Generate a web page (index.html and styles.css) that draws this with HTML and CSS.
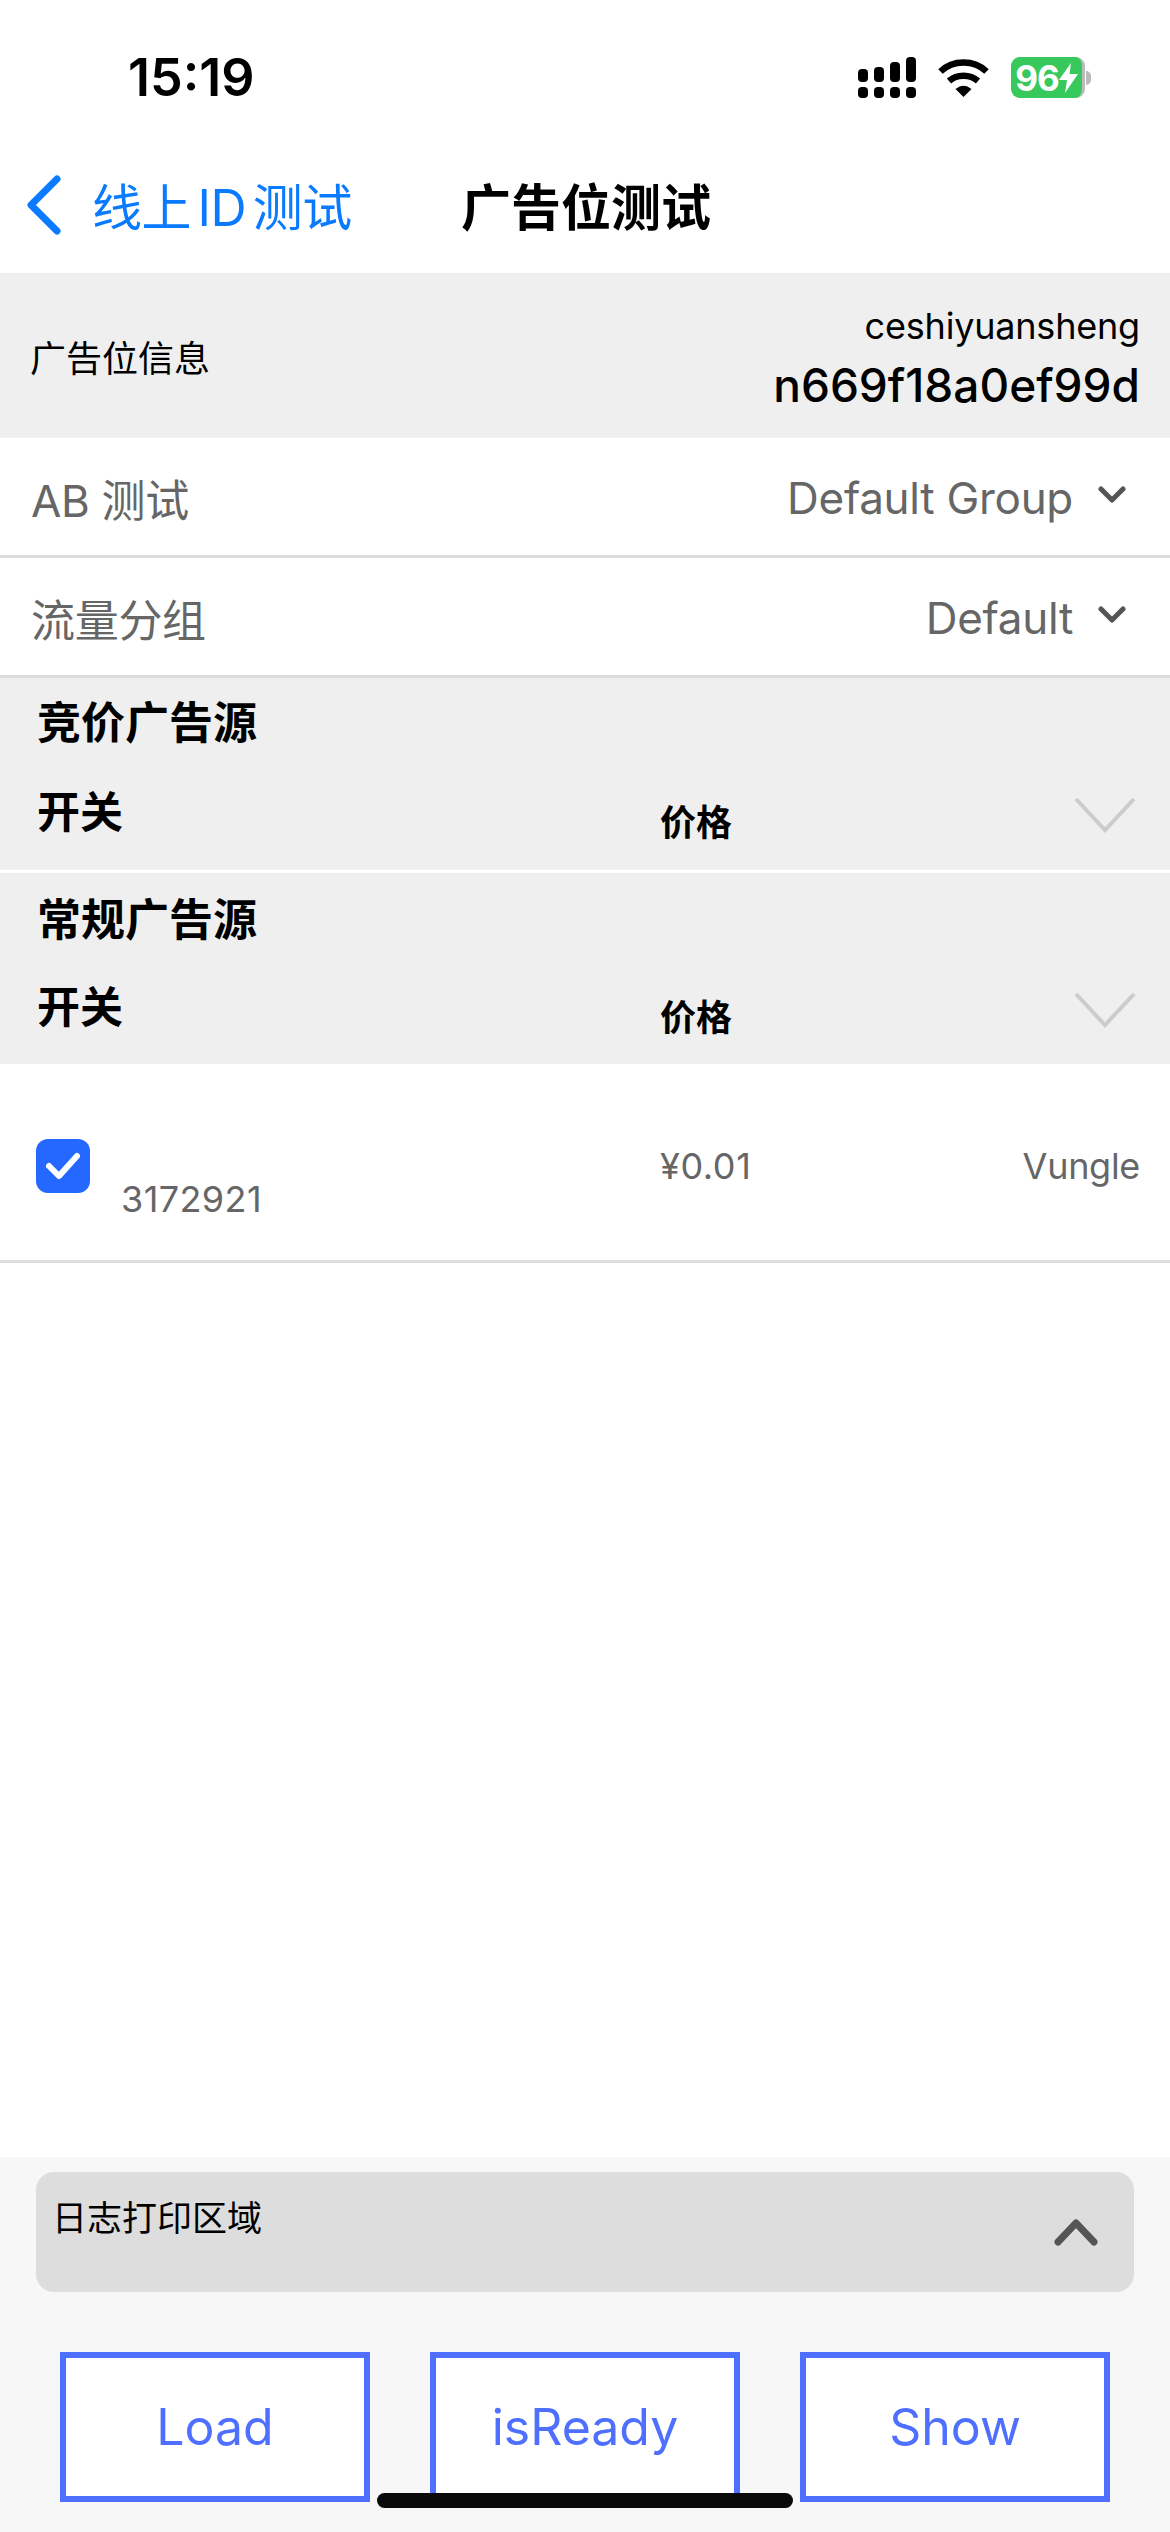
FILE: index.html
```html
<!DOCTYPE html>
<html lang="zh-CN">
<head>
    <meta charset="UTF-8">
    <meta name="viewport" content="width=device-width, initial-scale=1.0">
    <title>广告位测试</title>
    <link rel="stylesheet" href="styles.css">
</head>
<body>
    <div class="screen">
        <div class="status-bar">
            <span class="time">15:19</span>
            <div class="status-icons">
                <svg class="signal" width="58" height="41" viewBox="0 0 58 41" fill="#000">
                    <rect x="0" y="12" width="10" height="13" rx="4"/>
                    <rect x="16" y="10" width="10" height="15" rx="4"/>
                    <rect x="32" y="5" width="10" height="20" rx="4"/>
                    <rect x="48" y="0" width="10" height="25" rx="4"/>
                    <rect x="0" y="30" width="10" height="11" rx="4"/>
                    <rect x="16" y="30" width="10" height="11" rx="4"/>
                    <rect x="32" y="30" width="10" height="11" rx="4"/>
                    <rect x="48" y="30" width="10" height="11" rx="4"/>
                </svg>
                <svg class="wifi" width="51" height="39" viewBox="0 0 51 39" fill="none" stroke="#000" stroke-width="6.5">
                    <path d="M2.500 13.500 C15 1.500 36 1.500 48.500 13.500"/>
                    <path d="M11 23 C19 16 32 16 40 23"/>
                    <path d="M17.500 31 L25.500 39 L33.500 31 C28 26.500 23 26.500 17.500 31 Z" fill="#000" stroke="none"/>
                </svg>
                <div class="battery">
                    <div class="battery-body">
                        <span>96</span>
                        <svg width="19" height="30" viewBox="0 0 19 30" fill="#fff">
                            <path d="M12 0 L0 17 L8 17 L6 30 L19 11 L10.500 11 Z"/>
                        </svg>
                    </div>
                    <div class="battery-nub"></div>
                </div>
            </div>
        </div>

        <div class="nav-bar">
            <div class="nav-back">
                <svg width="36" height="60" viewBox="0 0 36 60" fill="none" stroke="#0a7aff" stroke-width="7" stroke-linecap="round" stroke-linejoin="round">
                    <path d="M31 4 L5 30 L31 56"/>
                </svg>
                <span>线上 ID 测试</span>
            </div>
            <h1 class="nav-title">广告位测试</h1>
        </div>

        <div class="info-head">
            <span class="info-label">广告位信息</span>
            <div class="info-values">
                <p class="info-name">ceshiyuansheng</p>
                <p class="info-id">n669f18a0ef99d</p>
            </div>
        </div>

        <div class="select-row">
            <span>AB 测试</span>
            <div class="select-value">
                <span>Default Group</span>
                <svg class="select-arrow" width="28" height="20" viewBox="0 0 28 20" fill="none" stroke="#555" stroke-width="5" stroke-linecap="round" stroke-linejoin="round">
                    <path d="M3 4 L14 15 L25 4"/>
                </svg>
            </div>
        </div>
        <div class="select-row">
            <span>流量分组</span>
            <div class="select-value">
                <span>Default</span>
                <svg class="select-arrow" width="28" height="20" viewBox="0 0 28 20" fill="none" stroke="#555" stroke-width="5" stroke-linecap="round" stroke-linejoin="round">
                    <path d="M3 4 L14 15 L25 4"/>
                </svg>
            </div>
        </div>

        <div class="source-group">
            <h2>竞价广告源</h2>
            <div class="source-head">
                <span class="source-switch">开关</span>
                <span class="source-price">价格</span>
                <svg width="62" height="36" viewBox="0 0 62 36" fill="none" stroke="#ccc" stroke-width="4">
                    <path d="M2 2 L31 33 L60 2"/>
                </svg>
            </div>
        </div>
        <div class="source-group source-group-last">
            <h2>常规广告源</h2>
            <div class="source-head">
                <span class="source-switch">开关</span>
                <span class="source-price">价格</span>
                <svg width="62" height="36" viewBox="0 0 62 36" fill="none" stroke="#ccc" stroke-width="4">
                    <path d="M2 2 L31 33 L60 2"/>
                </svg>
            </div>
        </div>

        <div class="source-row">
            <div class="check-cell">
                <div class="check-box">
                    <svg width="34" height="28" viewBox="0 0 34 28" fill="none" stroke="#fff" stroke-width="6" stroke-linecap="round" stroke-linejoin="round">
                        <path d="M3 14 L13 24 L31 4"/>
                    </svg>
                </div>
                <span class="source-id">3172921</span>
            </div>
            <span class="row-price">¥0.01</span>
            <span class="row-name">Vungle</span>
        </div>

        <div class="spacer"></div>

        <div class="bottom-panel">
            <div class="log-box">
                <span>日志打印区域</span>
                <svg width="44" height="28" viewBox="0 0 44 28" fill="none" stroke="#555" stroke-width="7" stroke-linecap="round" stroke-linejoin="round">
                    <path d="M4 24 L22 5 L40 24"/>
                </svg>
            </div>
            <div class="actions">
                <button class="action-btn">Load</button>
                <button class="action-btn">isReady</button>
                <button class="action-btn">Show</button>
            </div>
        </div>

        <div class="home-indicator"></div>
    </div>
</body>
</html>
```

FILE: styles.css
```css
* {
    box-sizing: border-box;
}
html, body {
    margin: 0;
    padding: 0;
}
body {
    font-family: Inter, "Noto Sans CJK SC", sans-serif;
    background: #fff;
    color: #000;
}
p, h1, h2 {
    margin: 0;
}
.screen {
    position: relative;
    width: 1170px;
    height: 2532px;
    display: flex;
    flex-direction: column;
    overflow: hidden;
}

/* status bar */
.status-bar {
    height: 136px;
    padding: 0 79px 0 128px;
    display: flex;
    justify-content: space-between;
    align-items: flex-start;
}
.time {
    font-size: 52px;
    font-weight: 600;
    line-height: 156px;
    height: 136px;
}
.status-icons {
    display: flex;
    align-items: flex-start;
    margin-top: 57px;
}
.signal {
    margin-right: 22px;
}
.wifi {
    margin-right: 22px;
    margin-top: 1px;
}
.battery {
    display: flex;
    align-items: center;
}
.battery-body {
    width: 74px;
    height: 41px;
    background: #38c95c;
    border-right: 3px solid #bbb;
    border-radius: 9px;
    color: #fff;
    font-size: 35px;
    font-weight: 700;
    display: flex;
    align-items: center;
    justify-content: center;
    letter-spacing: -1px;
}
.battery-nub {
    width: 5px;
    height: 14px;
    background: #bbb;
    border-radius: 0 7px 7px 0;
    margin-left: 1px;
}

/* nav */
.nav-bar {
    height: 137px;
    padding-left: 26px;
    display: flex;
    align-items: center;
}
.nav-back {
    display: flex;
    align-items: center;
    width: 435px;
    color: #0a7aff;
    font-size: 50px;
    line-height: 60px;
    letter-spacing: -0.500px;
    word-spacing: -7px;
}
.nav-back svg {
    margin-right: 30px;
}
.nav-back span,
.nav-title {
    padding-top: 6px;
}
.nav-title {
    font-size: 50px;
    font-weight: 600;
    line-height: 60px;
}

/* ad slot info */
.info-head {
    height: 165px;
    background: #efefef;
    padding: 0 30px;
    display: flex;
    justify-content: space-between;
    align-items: center;
}
.info-label {
    font-size: 36px;
}
.info-values {
    text-align: right;
    padding-top: 3px;
}
.info-name {
    font-size: 36px;
    line-height: 56px;
    letter-spacing: -0.200px;
}
.info-id {
    font-size: 46px;
    font-weight: 500;
    line-height: 62px;
}
.select-row {
    height: 120px;
    padding: 2px 44px 0 31px;
    border-bottom: 3px solid #ddd;
    color: #666;
    font-size: 44px;
    letter-spacing: -0.300px;
    display: flex;
    justify-content: space-between;
    align-items: center;
}
.select-value {
    display: flex;
    align-items: center;
}
.select-arrow {
    margin-left: 25px;
    margin-top: -6px;
}

/* ad sources */
.source-group {
    height: 195px;
    background: #efefef;
    border-bottom: 3px solid #fff;
    padding: 16px 34px 0 37px;
}
.source-group-last {
    height: 191px;
    border-bottom: 0;
    padding-top: 18px;
}
.source-group h2 {
    font-size: 44px;
    font-weight: 600;
    line-height: 58px;
    margin-bottom: 26px;
}
.source-group-last h2 {
    margin-bottom: 24px;
}
.source-head {
    display: flex;
    align-items: center;
}
.source-head svg {
    margin-top: 6px;
}
.source-switch {
    width: 623px;
    font-size: 43px;
    font-weight: 600;
    line-height: 58px;
}
.source-price {
    flex: 1;
    font-size: 36px;
    font-weight: 600;
    padding-top: 16px;
}
.source-row {
    height: 199px;
    border-bottom: 3px solid #ddd;
    padding: 75px 30px 0 36px;
    color: #666;
    font-size: 36px;
    display: flex;
    align-items: flex-start;
}
.check-cell {
    width: 624px;
    display: flex;
    align-items: flex-start;
}
.check-box {
    width: 54px;
    height: 54px;
    background: #2468ff;
    border-radius: 12px;
    display: flex;
    align-items: center;
    justify-content: center;
}
.source-id {
    margin-left: 31px;
    line-height: 48px;
    margin-top: 36px;
    letter-spacing: 0.400px;
}
.row-price {
    flex: 1;
    line-height: 48px;
    margin-top: 3px;
    letter-spacing: 0.600px;
}
.row-name {
    line-height: 48px;
    margin-top: 3px;
    letter-spacing: -0.300px;
}
.spacer {
    flex: 1;
}

/* bottom */
.bottom-panel {
    height: 375px;
    background: #f7f7f7;
    padding: 15px 36px 0;
}
.log-box {
    height: 120px;
    background: #ddd;
    border-radius: 18px;
    padding: 18px 36px 0 16px;
    font-size: 35px;
    display: flex;
    justify-content: space-between;
    align-items: flex-start;
}
.log-box svg {
    margin-top: 28px;
}
.actions {
    display: flex;
    justify-content: space-between;
    margin-top: 60px;
    padding: 0 24px;
}
.action-btn {
    width: 310px;
    height: 150px;
    background: #fff;
    border: 6px solid #4e6fff;
    border-radius: 0;
    color: #4e6fff;
    font-family: inherit;
    font-size: 50px;
    padding: 0;
}
.home-indicator {
    position: absolute;
    left: 377px;
    top: 2493px;
    width: 416px;
    height: 15px;
    background: #0a0a0a;
    border-radius: 8px;
}
```
